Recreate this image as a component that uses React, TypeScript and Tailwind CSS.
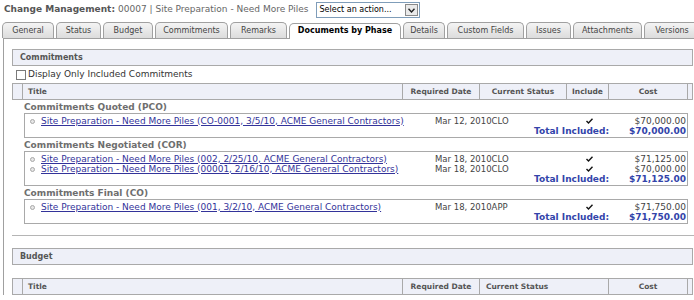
import React from "react";

const font = { fontFamily: '"DejaVu Sans", Verdana, sans-serif' };

const tabs: { label: string; w: string; active?: boolean }[] = [
  { label: "General", w: "w-[52px]" },
  { label: "Status", w: "w-[45px]" },
  { label: "Budget", w: "w-[50px]" },
  { label: "Commitments", w: "w-[73px]" },
  { label: "Remarks", w: "w-[57px]" },
  { label: "Documents by Phase", w: "w-[112px]", active: true },
  { label: "Details", w: "w-[42px]" },
  { label: "Custom Fields", w: "w-[77px]" },
  { label: "Issues", w: "w-[45px]" },
  { label: "Attachments", w: "w-[69px]" },
  { label: "Versions", w: "w-[56px]" },
];

type Row = { title: string; date: string; status: string; cost: string };
type Group = { name: string; rows: Row[]; total: string };

const groups: Group[] = [
  {
    name: "Commitments Quoted (PCO)",
    rows: [
      {
        title: "Site Preparation - Need More Piles (CO-0001, 3/5/10, ACME General Contractors)",
        date: "Mar 12, 2010",
        status: "CLO",
        cost: "$70,000.00",
      },
    ],
    total: "$70,000.00",
  },
  {
    name: "Commitments Negotiated (COR)",
    rows: [
      {
        title: "Site Preparation - Need More Piles (002, 2/25/10, ACME General Contractors)",
        date: "Mar 18, 2010",
        status: "CLO",
        cost: "$71,125.00",
      },
      {
        title: "Site Preparation - Need More Piles (00001, 2/16/10, ACME General Contractors)",
        date: "Mar 18, 2010",
        status: "CLO",
        cost: "$70,000.00",
      },
    ],
    total: "$71,125.00",
  },
  {
    name: "Commitments Final (CO)",
    rows: [
      {
        title: "Site Preparation - Need More Piles (001, 3/2/10, ACME General Contractors)",
        date: "Mar 18, 2010",
        status: "APP",
        cost: "$71,750.00",
      },
    ],
    total: "$71,750.00",
  },
];

function Check() {
  return (
    <svg width="7" height="6" viewBox="0 0 7 6">
      <path d="M0.5 3 L2.5 5 L6.5 0.8" stroke="#111" strokeWidth="1.4" fill="none" />
    </svg>
  );
}

function HeaderCell({ children, className = "" }: { children?: React.ReactNode; className?: string }) {
  return (
    <div className={`flex items-center justify-center border-r border-[#a9a9a9] text-[7.5px] font-bold text-[#555] ${className}`}>
      {children}
    </div>
  );
}

export default function App() {
  return (
    <div className="w-[694px] h-[300px] overflow-hidden bg-white" style={font}>
      {/* Title row */}
      <div className="flex items-center h-[20px] pl-[4px]">
        <span className="text-[9px] font-bold text-[#555]">Change Management:</span>
        <span className="text-[9px] text-[#666] ml-[3px]">00007 | Site Preparation - Need More Piles</span>
        <div className="ml-[7px] flex h-[16px] w-[104px] items-center border border-[#7f9db9] bg-white">
          <span className="flex-1 pl-[3px] text-[8px] text-black">Select an action...</span>
          <div className="flex h-[12px] w-[13px] items-center justify-center border border-[#8a8a8a] bg-[#eaeaea] mr-[1px]">
            <svg width="7" height="5" viewBox="0 0 7 5">
              <path d="M0.5 0.8 L3.5 4 L6.5 0.8" stroke="#222" strokeWidth="1.4" fill="none" />
            </svg>
          </div>
        </div>
      </div>

      {/* Tabs */}
      <div className="flex items-end gap-[2px] pl-[2px] mt-[2px] h-[16px]">
        {tabs.map((t) => (
          <div
            key={t.label}
            className={`${t.w} shrink-0 flex items-center justify-center rounded-t-[5px] border border-b-0 border-[#a0a0a0] text-[8px] ${
              t.active
                ? "h-[16px] bg-white font-bold text-black relative z-10 mb-[-1px] pb-[1px]"
                : "h-[16px] bg-gradient-to-b from-[#f4f4f4] to-[#dcdcdc] text-[#444]"
            }`}
          >
            {t.label}
          </div>
        ))}
      </div>

      {/* Content */}
      <div className="ml-[3px] border-l border-t border-[#a0a0a0] pt-[10px] pl-[8px]">
        {/* Commitments panel */}
        <div className="w-[681px]">
          <div className="flex h-[17px] items-center border border-[#a9a9a9] bg-[#eef0f8] pl-[7px] text-[8px] font-bold text-[#555]">
            Commitments
          </div>
          <div className="flex h-[17px] items-center pl-[4px]">
            <div className="h-[10px] w-[10px] border border-[#7a7a7a] bg-white" />
            <span className="ml-[2px] text-[9px] text-[#333]">Display Only Included Commitments</span>
          </div>
          <div className="flex h-[17px] border border-[#a9a9a9] bg-[#eef0f8]">
            <div className="w-[10px] border-r border-[#a9a9a9]" />
            <div className="flex flex-1 items-center pl-[5px] border-r border-[#a9a9a9] text-[7.5px] font-bold text-[#555]">Title</div>
            <HeaderCell className="w-[77px]">Required Date</HeaderCell>
            <HeaderCell className="w-[87px]">Current Status</HeaderCell>
            <HeaderCell className="w-[42px]">Include</HeaderCell>
            <HeaderCell className="w-[79px]">Cost</HeaderCell>
            <div className="w-[4px]" />
          </div>

          <div className="pl-[12px] pr-[5px] pb-[11px]">
            {groups.map((g) => (
              <div key={g.name}>
                <div className="flex h-[13px] items-end pb-[1px] text-[9px] font-bold text-[#6e6e6e] leading-none">{g.name}</div>
                <div className="border border-[#a9a9a9] pt-[2px] pb-[1px]">
                  {g.rows.map((r, i) => (
                    <div key={i} className="flex h-[10px] items-center leading-none">
                      <div className="flex w-[16px] shrink-0 justify-center pr-[2px]">
                        <span className="block h-[5px] w-[5px] rounded-full border border-[#a8a8a8] bg-[#e6e6e6]" />
                      </div>
                      <a className="flex-1 text-[9px] text-[#33339a] underline underline-offset-[1px]">{r.title}</a>
                      <div className="w-[133px] shrink-0 text-[8.5px] text-[#444]">
                        {r.date}
                        {r.status}
                      </div>
                      <div className="flex w-[42px] shrink-0 justify-center">
                        <Check />
                      </div>
                      <div className="w-[77px] shrink-0 text-right pr-[1px] text-[9px] text-[#444]">{r.cost}</div>
                    </div>
                  ))}
                  <div className="flex h-[10px] items-center justify-end text-[9px] font-bold text-[#3344aa] leading-none">
                    <span className="pr-[1px]">Total Included:</span>
                    <span className="w-[77px] text-right pr-[1px]">{g.total}</span>
                  </div>
                </div>
              </div>
            ))}
          </div>
          <div className="border-t border-[#b5b5b5] w-[683px]" />
        </div>

        {/* Budget panel */}
        <div className="w-[681px] mt-[12px]">
          <div className="flex h-[17px] items-center border border-[#a9a9a9] bg-[#eef0f8] pl-[7px] text-[8px] font-bold text-[#555]">
            Budget
          </div>
          <div className="h-[13px]" />
          <div className="flex h-[17px] border border-[#a9a9a9] bg-[#eef0f8]">
            <div className="w-[10px] border-r border-[#a9a9a9]" />
            <div className="flex flex-1 items-center pl-[5px] border-r border-[#a9a9a9] text-[7.5px] font-bold text-[#555]">Title</div>
            <HeaderCell className="w-[77px]">Required Date</HeaderCell>
            <div className="flex w-[129px] items-center pl-[6px] border-r border-[#a9a9a9] text-[7.5px] font-bold text-[#555]">Current Status</div>
            <HeaderCell className="w-[79px]">Cost</HeaderCell>
            <div className="w-[4px]" />
          </div>
        </div>
      </div>
    </div>
  );
}
